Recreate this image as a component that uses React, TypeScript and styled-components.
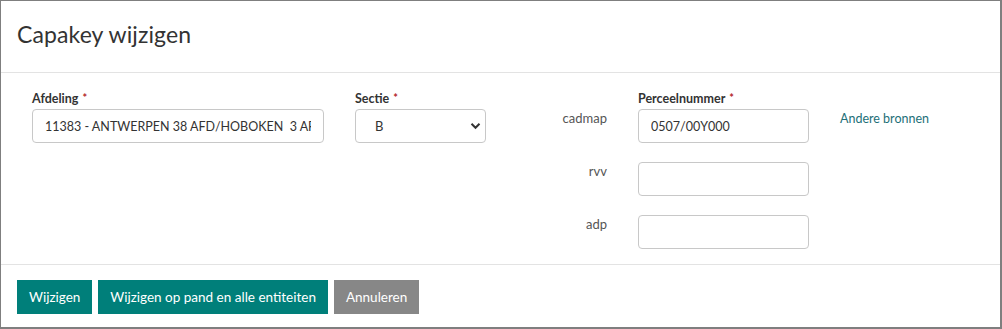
import React from "react";
import styled, { createGlobalStyle } from "styled-components";

const GlobalStyle = createGlobalStyle`
  html, body {
    margin: 0;
    padding: 0;
    background: #fff;
  }
  body {
    font-family: Lato, "Open Sans", sans-serif;
    color: #333;
  }
`;

const Frame = styled.div`
  width: 1002px;
  box-sizing: border-box;
  border-style: solid;
  border-color: #7f7f7f;
  border-width: 1px 2px 2px 1px;
  background: #fff;
`;

const Header = styled.div`
  padding: 14px 16px 18px;
  border-bottom: 1px solid #e3e3e3;
`;

const Title = styled.h2`
  margin: 0;
  font-size: 23px;
  line-height: 39px;
  font-weight: 400;
  letter-spacing: 0.1px;
  color: #333;
`;

const Body = styled.div`
  display: grid;
  grid-template-columns: 292px 131px 90px 171px auto;
  grid-template-rows: auto 53px 53px 34px;
  column-gap: 31px;
  padding: 16px 0 15px 31px;
  border-bottom: 1px solid #e3e3e3;
`;

const Cell = styled.div<{ $col: number; $row: number }>`
  grid-column: ${(p) => p.$col};
  grid-row: ${(p) => p.$row};
`;

const FieldLabel = styled.label`
  display: block;
  font-size: 12.5px;
  font-weight: 700;
  line-height: 18px;
  color: #333;
  margin-bottom: 1px;
`;

const Required = styled.span`
  color: #b3262b;
  font-size: 11px;
  margin-left: 4px;
  vertical-align: 1px;
`;

const SourceLabel = styled.div`
  text-align: right;
  padding-top: 1px;
  font-size: 13px;
  color: #555;
`;

const TextInput = styled.input`
  box-sizing: border-box;
  width: 100%;
  height: 34px;
  padding: 0 12px;
  border: 1px solid #c8c8c8;
  border-radius: 4px;
  font-family: inherit;
  font-size: 12.5px;
  color: #333;
  background: #fff;
  outline: none;
`;

const SelectBox = styled.div`
  box-sizing: border-box;
  height: 34px;
  border: 1px solid #c8c8c8;
  border-radius: 4px;
  display: flex;
  align-items: center;
  justify-content: space-between;
  padding: 0 4px 0 19px;
  font-size: 13px;
  color: #333;
`;

const OtherSources = styled.div`
  padding-top: 2px;
  font-size: 12.5px;
  color: #1d6f78;
`;

const Footer = styled.div`
  display: flex;
  gap: 6px;
  padding: 15px 16px 13px;
`;

const Button = styled.button<{ $variant?: "primary" | "muted" }>`
  height: 34px;
  padding: 0 12px;
  border: none;
  border-radius: 0;
  font-family: inherit;
  font-size: 13.5px;
  color: #fff;
  background: ${(p) => (p.$variant === "muted" ? "#878787" : "#007f7a")};
  cursor: pointer;
`;

const Chevron = () => (
  <svg width="11" height="8" viewBox="0 0 11 8">
    <path d="M1.5 1.8 L5.5 5.8 L9.5 1.8" fill="none" stroke="#333" strokeWidth="2" />
  </svg>
);

const App = () => {
  return (
    <Frame>
      <GlobalStyle />
      <Header>
        <Title>Capakey wijzigen</Title>
      </Header>

      <Body>
        <Cell $col={1} $row={1}>
          <FieldLabel>
            Afdeling<Required>*</Required>
          </FieldLabel>
        </Cell>
        <Cell $col={2} $row={1}>
          <FieldLabel>
            Sectie<Required>*</Required>
          </FieldLabel>
        </Cell>
        <Cell $col={4} $row={1}>
          <FieldLabel>
            Perceelnummer<Required>*</Required>
          </FieldLabel>
        </Cell>

        <Cell $col={1} $row={2}>
          <TextInput readOnly value="11383 - ANTWERPEN 38 AFD/HOBOKEN  3 AFD" />
        </Cell>
        <Cell $col={2} $row={2}>
          <SelectBox>
            <span>B</span>
            <Chevron />
          </SelectBox>
        </Cell>
        <Cell $col={3} $row={2}>
          <SourceLabel>cadmap</SourceLabel>
        </Cell>
        <Cell $col={4} $row={2}>
          <TextInput readOnly value="0507/00Y000" />
        </Cell>
        <Cell $col={5} $row={2}>
          <OtherSources>Andere bronnen</OtherSources>
        </Cell>

        <Cell $col={3} $row={3}>
          <SourceLabel>rvv</SourceLabel>
        </Cell>
        <Cell $col={4} $row={3}>
          <TextInput readOnly value="" />
        </Cell>

        <Cell $col={3} $row={4}>
          <SourceLabel>adp</SourceLabel>
        </Cell>
        <Cell $col={4} $row={4}>
          <TextInput readOnly value="" />
        </Cell>
      </Body>

      <Footer>
        <Button>Wijzigen</Button>
        <Button>Wijzigen op pand en alle entiteiten</Button>
        <Button $variant="muted">Annuleren</Button>
      </Footer>
    </Frame>
  );
};

export default App;
